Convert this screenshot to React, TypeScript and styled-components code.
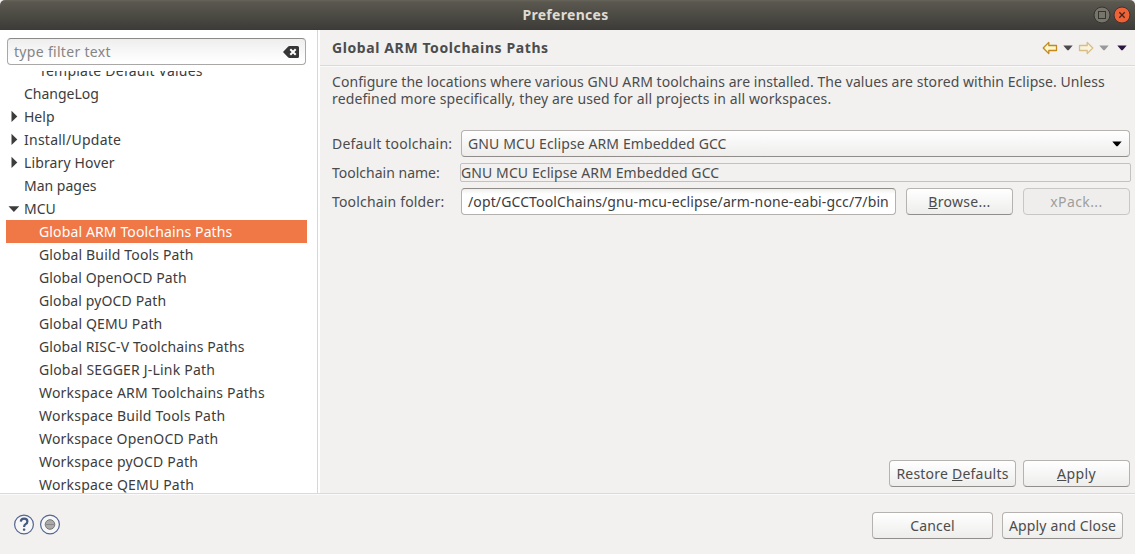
import React from 'react';
import styled, { createGlobalStyle } from 'styled-components';

const Global = createGlobalStyle`
  * { box-sizing: border-box; }
  body { margin: 0; overflow: hidden; }
`;

const Window = styled.div`
  width: 1135px;
  height: 554px;
  display: flex;
  flex-direction: column;
  background: #f2f1f0;
  color: #4c4c4c;
  font: 14px/17px 'Noto Sans', 'Open Sans', sans-serif;
`;

const Label = styled.span<{ $ls?: number }>`
  white-space: pre;
  letter-spacing: ${(p) => p.$ls ?? 0}px;
`;

const TitleBar = styled.header`
  height: 30px;
  flex: none;
  display: grid;
  grid-template-columns: 80px 1fr 80px;
  align-items: center;
  padding-right: 4px;
  background: linear-gradient(#66645c 0, #5a584f 2px, #3d3c38 29px, #393834 30px);
  border-radius: 5px 5px 0 0;
  color: #dfdbd2;
`;

const TitleText = styled.div`
  text-align: center;
  font-weight: 700;
  padding-bottom: 1px;
`;

const WindowControls = styled.div`
  display: flex;
  justify-content: flex-end;
  gap: 2px;
`;

const Body = styled.main`
  height: 463px;
  flex: none;
  display: flex;
`;

const Sidebar = styled.aside`
  width: 320px;
  flex: none;
  display: flex;
  background: #fff;
`;

const SidebarContent = styled.div`
  width: 318px;
  padding: 8px 10px 0 6px;
  border-right: 1px solid #d9d7d5;
`;

const Field = styled.div`
  height: 27px;
  display: flex;
  align-items: center;
  padding: 0 6px;
  border: 1px solid #b3b0ad;
  border-top-color: #8e8b88;
  border-radius: 4px;
  background: linear-gradient(#efeeed, #fff 5px);
  color: #3c3c3c;
`;

const FilterField = styled(Field)`
  width: 299px;
  margin-left: 1px;
  justify-content: space-between;
  border-color: #8c8a88 #aaa8a6 #aaa8a6;
  background: linear-gradient(#efeeee, #fff 90%);
  color: #858585;
`;

const TreeViewport = styled.div`
  height: 422px;
  margin-top: 6px;
  display: flex;
  flex-direction: column;
  justify-content: flex-start;
  overflow: hidden;
`;

const TreeList = styled.ul`
  list-style: none;
  margin: -12px 0 0;
  padding: 0;
`;

const TreeRow = styled.li<{ $child?: boolean; $selected?: boolean }>`
  width: 301px;
  height: 23px;
  display: flex;
  align-items: center;
  padding-left: ${(p) => (p.$child ? 33 : 0)}px;
  background: ${(p) => (p.$selected ? '#f07746' : 'transparent')};
  color: ${(p) => (p.$selected ? '#fff' : '#3c3c3c')};
`;

const Expander = styled.span`
  width: 18px;
  height: 14px;
  flex: none;
  display: flex;
`;

const Page = styled.section`
  flex: 1;
  display: flex;
  flex-direction: column;
`;

const PageHeader = styled.div`
  height: 37px;
  flex: none;
  display: flex;
  justify-content: space-between;
  align-items: center;
  padding: 0 8px 1px 12px;
  border-bottom: 1px solid #fafafa;
  box-shadow: inset 0 -1px #dcdad8;
  font-weight: 700;
`;

const HistoryTools = styled.div`
  display: flex;
  align-items: center;
`;

const Description = styled.p`
  margin: 0;
  padding: 6px 0 0 12px;
  display: flex;
  flex-direction: column;
`;

const Form = styled.div`
  margin: 23px 5px 0 12px;
  display: grid;
  grid-template-columns: 129px 1fr;
  grid-template-rows: 27px 31px 27px;
  align-items: center;
`;

const Combo = styled.div`
  height: 27px;
  display: flex;
  justify-content: space-between;
  align-items: center;
  padding: 0 7px 0 6px;
  border: 1px solid #b5b2af;
  border-bottom-color: #8f8c89;
  border-radius: 4px;
  background: linear-gradient(#fff, #eeedec);
`;

const ReadonlyField = styled.div`
  height: 19px;
  display: flex;
  align-items: center;
  margin: 0 -1px;
  border: 1px solid #c4c2c0;
  border-radius: 2px;
`;

const FolderRow = styled.div`
  display: grid;
  grid-template-columns: 435px 107px 107px;
  column-gap: 10px;
`;

const Button = styled.button<{ $w: number }>`
  width: ${(p) => p.$w}px;
  height: 27px;
  flex: none;
  display: flex;
  align-items: center;
  justify-content: center;
  padding: 0;
  border: 1px solid #b5b2af;
  border-bottom-color: #918e8b;
  border-radius: 4px;
  background: linear-gradient(#fff, #ededec);
  color: #4c4c4c;
  font: inherit;

  &:disabled {
    border-color: #c9c7c5;
    background: #efeeed;
    color: #a09e9c;
  }
`;

const Mnemonic = styled.span`
  text-decoration: underline 1px;
  text-underline-offset: 1px;
  text-decoration-skip-ink: none;
`;

const PageActions = styled.div`
  margin-top: auto;
  display: flex;
  justify-content: flex-end;
  gap: 7px;
  padding: 0 5px 6px 0;
`;

const Footer = styled.footer`
  flex: 1;
  display: flex;
  align-items: center;
  justify-content: space-between;
  padding: 0 12px 0 14px;
  border-top: 1px solid #dcdad8;
  box-shadow: inset 0 1px #fafafa;
`;

const FooterGroup = styled.div<{ $gap: number; $top?: number }>`
  display: flex;
  align-items: center;
  gap: ${(p) => p.$gap}px;
  padding-top: ${(p) => p.$top ?? 3}px;
`;

const Chevron = ({ color, mr = 0 }: { color: string; mr?: number }) => (
  <svg width={10} height={6} viewBox="0 0 10 6" style={{ marginRight: mr }}>
    <path d="M.3 .5H9.7L5.6 5.3H4.4Z" fill={color} />
  </svg>
);

const ArrowIcon = styled.svg`
  margin-right: 5px;
`;

const Arrow = ({ forward }: { forward?: boolean }) => (
  <ArrowIcon width={16} height={14} viewBox="0 0 16 14" opacity={forward ? 0.5 : 1}>
    <g transform={forward ? 'translate(16 0) scale(-1 1)' : undefined}>
      <path
        d="M1.2 7L6.8 1.4V4.5H14.5V9.5H6.8V12.6Z"
        fill="#fff6c9"
        stroke="#c08a20"
        strokeWidth={1.3}
        strokeLinejoin="round"
      />
    </g>
  </ArrowIcon>
);

type Node = { text: string; ls?: number; child?: boolean; state?: 'open' | 'closed'; selected?: boolean };

const nodes: Node[] = [
  { text: 'Template Default Values', child: true, ls: 0.2 },
  { text: 'ChangeLog' },
  { text: 'Help', state: 'closed' },
  { text: 'Install/Update', state: 'closed', ls: 0.25 },
  { text: 'Library Hover', state: 'closed', ls: 0.14 },
  { text: 'Man pages' },
  { text: 'MCU', state: 'open' },
  { text: 'Global ARM Toolchains Paths', child: true, selected: true, ls: 0.13 },
  { text: 'Global Build Tools Path', child: true, ls: 0.16 },
  { text: 'Global OpenOCD Path', child: true, ls: 0.1 },
  { text: 'Global pyOCD Path', child: true, ls: 0.12 },
  { text: 'Global QEMU Path', child: true, ls: 0.13 },
  { text: 'Global RISC-V Toolchains Paths', child: true, ls: 0.1 },
  { text: 'Global SEGGER J-Link Path', child: true, ls: 0.2 },
  { text: 'Workspace ARM Toolchains Paths', child: true, ls: 0.2 },
  { text: 'Workspace Build Tools Path', child: true, ls: 0.21 },
  { text: 'Workspace OpenOCD Path', child: true, ls: 0.17 },
  { text: 'Workspace pyOCD Path', child: true, ls: 0.2 },
  { text: 'Workspace QEMU Path', child: true, ls: 0.2 },
];

export default function App() {
  return (
    <>
      <Global />
      <Window>
        <TitleBar>
          <span />
          <TitleText>
            <Label $ls={0.3}>Preferences</Label>
          </TitleText>
          <WindowControls>
            <svg width={18} height={18} viewBox="0 0 18 18">
              <circle cx={9} cy={9} r={8} fill="#76746b" stroke="#35342f" />
              <rect x={5.5} y={5.5} width={7} height={7} fill="none" stroke="#35342f" />
            </svg>
            <svg width={18} height={18} viewBox="0 0 18 18">
              <circle cx={9} cy={9} r={8} fill="#ee6238" stroke="#47302a" />
              <path d="M6.3 6.3L11.7 11.7M11.7 6.3L6.3 11.7" stroke="#47251b" strokeWidth={1.3} />
            </svg>
          </WindowControls>
        </TitleBar>
        <Body>
          <Sidebar>
            <SidebarContent>
              <FilterField>
                <Label $ls={0.31}>type filter text</Label>
                <svg width={16} height={12} viewBox="0 0 16 12">
                  <path d="M0 6L5 .8Q5.6 0 6.6 0H14.5Q16 0 16 1.5V10.5Q16 12 14.5 12H6.6Q5.6 12 5 11.2Z" fill="#363636" />
                  <path d="M7.3 3.3L12.7 8.7M12.7 3.3L7.3 8.7" stroke="#fff" strokeWidth={2} />
                </svg>
              </FilterField>
              <TreeViewport>
                <TreeList>
                  {nodes.map((n) => (
                    <TreeRow key={n.text} $child={n.child} $selected={n.selected}>
                      {!n.child && (
                        <Expander>
                          {n.state && (
                            <svg width={18} height={14} viewBox="0 0 18 14">
                              <path d={n.state === 'open' ? 'M2.5 4.3H13.3L7.9 10Z' : 'M5.5 .8V12L11.3 6.4Z'} fill="#3c3c3c" />
                            </svg>
                          )}
                        </Expander>
                      )}
                      <Label $ls={n.ls}>{n.text}</Label>
                    </TreeRow>
                  ))}
                </TreeList>
              </TreeViewport>
            </SidebarContent>
          </Sidebar>
          <Page>
            <PageHeader>
              <Label $ls={0.6}>Global ARM Toolchains Paths</Label>
              <HistoryTools>
                <Arrow />
                <Chevron color="#4c4a4c" mr={5} />
                <Arrow forward />
                <Chevron color="#999" mr={8} />
                <Chevron color="#2b1640" />
              </HistoryTools>
            </PageHeader>
            <Description>
              <Label $ls={0.06}>Configure the locations where various GNU ARM toolchains are installed. The values are stored within Eclipse. Unless</Label>
              <Label $ls={0.13}>redefined more specifically, they are used for all projects in all workspaces.</Label>
            </Description>
            <Form>
              <Label $ls={0.2}>Default toolchain:</Label>
              <Combo>
                <Label $ls={0.11}>GNU MCU Eclipse ARM Embedded GCC</Label>
                <Chevron color="#000" />
              </Combo>
              <Label>Toolchain name:</Label>
              <ReadonlyField>
                <Label $ls={0.1}>GNU MCU Eclipse ARM Embedded GCC</Label>
              </ReadonlyField>
              <Label $ls={0.17}>Toolchain folder:</Label>
              <FolderRow>
                <Field>
                  <Label $ls={0.12}>/opt/GCCToolChains/gnu-mcu-eclipse/arm-none-eabi-gcc/7/bin</Label>
                </Field>
                <Button $w={107}>
                  <Label $ls={0.3}><Mnemonic>B</Mnemonic>rowse...</Label>
                </Button>
                <Button $w={107} disabled>
                  <Label $ls={0.4}>xPack...</Label>
                </Button>
              </FolderRow>
            </Form>
            <PageActions>
              <Button $w={127}>
                <Label $ls={0.22}>Restore <Mnemonic>D</Mnemonic>efaults</Label>
              </Button>
              <Button $w={107}>
                <Label $ls={0.4}><Mnemonic>A</Mnemonic>pply</Label>
              </Button>
            </PageActions>
          </Page>
        </Body>
        <Footer>
          <FooterGroup $gap={5} $top={0}>
            <svg width={21} height={21} viewBox="0 0 21 21">
              <circle cx={10} cy={10.5} r={9.4} fill="#f7f7f8" stroke="#52668f" strokeWidth={1.2} />
              <path d="M6.8 7.6Q7 4.7 10.1 4.7Q13.4 4.7 13.4 7.4Q13.4 9.1 11.6 10.1Q10.1 11 10.1 12.9" fill="none" stroke="#44597f" strokeWidth={2.2} />
              <rect x={8.9} y={14.4} width={2.4} height={2.3} rx={0.6} fill="#44597f" />
            </svg>
            <svg width={21} height={21} viewBox="0 0 21 21">
              <circle cx={10} cy={10.5} r={9.4} fill="#f7f7f8" stroke="#52668f" strokeWidth={1.2} />
              <circle cx={10} cy={10.5} r={4.8} fill="#aaa" stroke="#777" />
              <path d="M5.5 10.5H14.5" stroke="#888" />
            </svg>
          </FooterGroup>
          <FooterGroup $gap={9}>
            <Button $w={121}>
              <Label $ls={0.15}>Cancel</Label>
            </Button>
            <Button $w={121}>
              <Label $ls={0.15}>Apply and Close</Label>
            </Button>
          </FooterGroup>
        </Footer>
      </Window>
    </>
  );
}
